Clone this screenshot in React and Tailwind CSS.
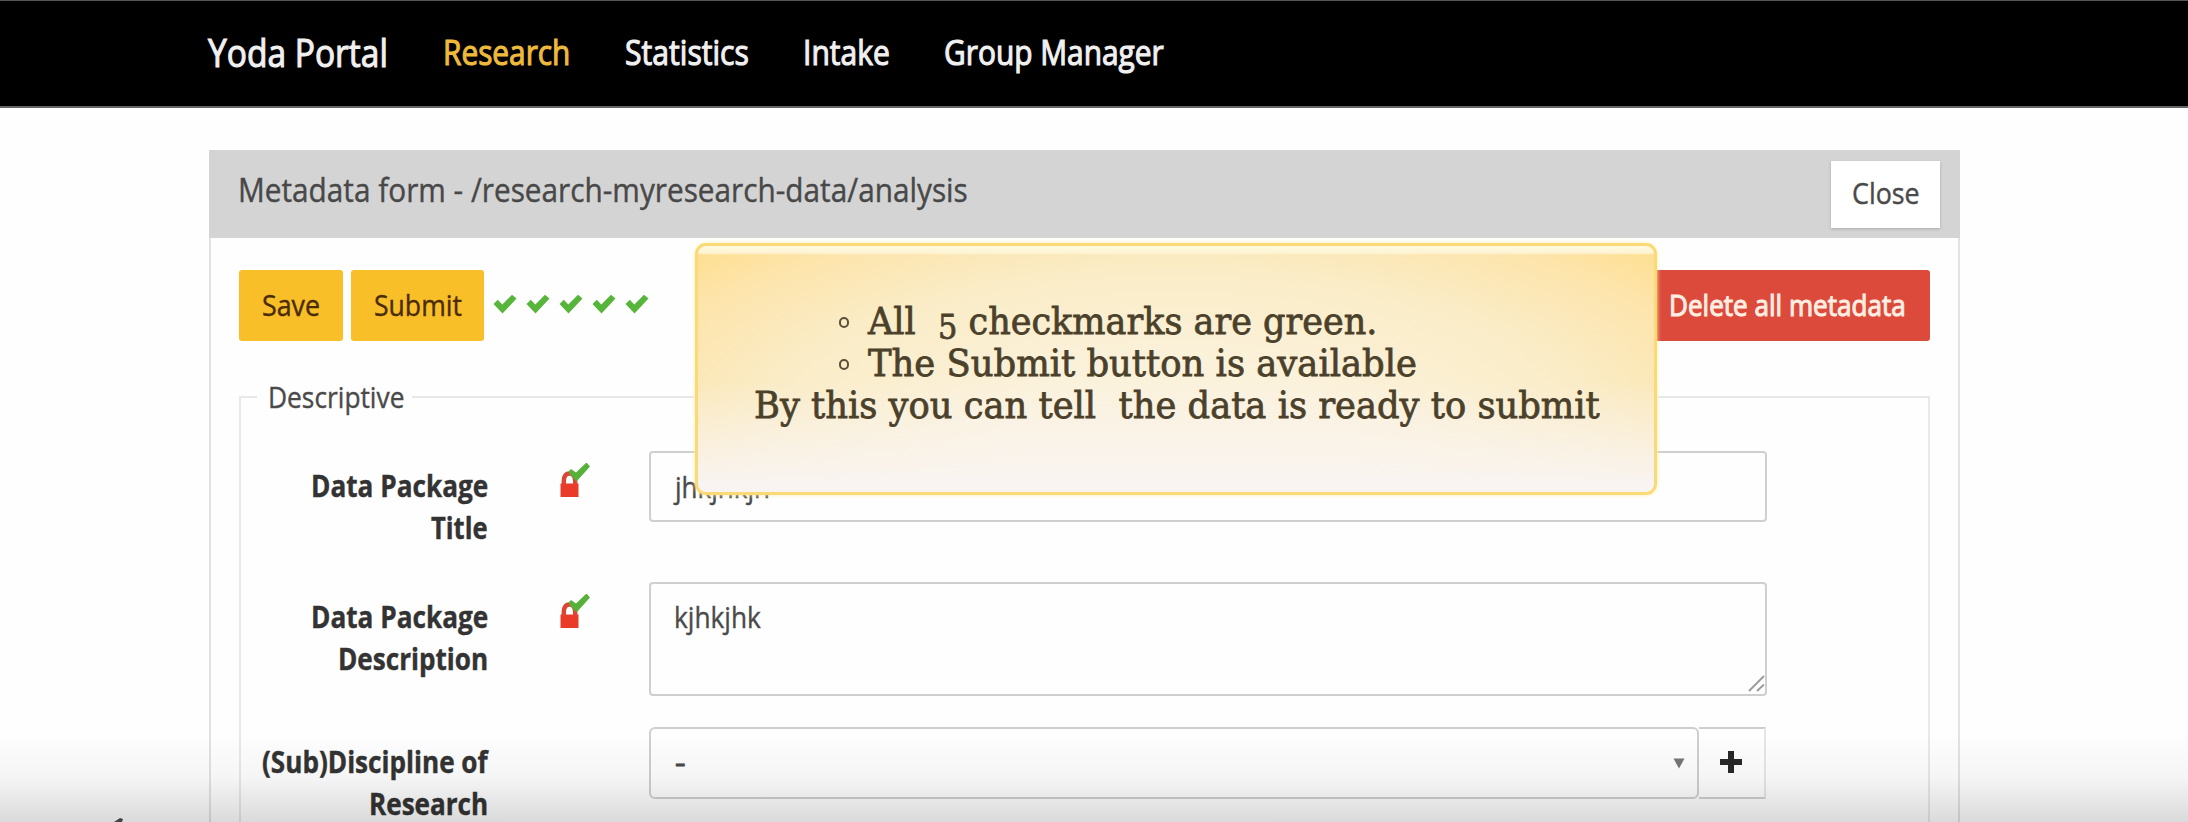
import { useLayoutEffect, useRef, useState } from "react";

// Sets its text narrower or wider so that it fills the width of its box.
function FitText({ className = "", children }) {
  const box = useRef(null);
  const text = useRef(null);
  const [scale, setScale] = useState(1);
  useLayoutEffect(() => {
    setScale(box.current.clientWidth / text.current.offsetWidth);
  }, []);
  return (
    <span ref={box} className={`block shrink-0 ${className}`}>
      <span
        ref={text}
        className="inline-block origin-left whitespace-pre"
        style={{ transform: `scaleX(${scale})` }}
      >
        {children}
      </span>
    </span>
  );
}

function Check({ className = "" }) {
  return (
    <svg viewBox="0 0 24 20" className={`shrink-0 ${className}`} preserveAspectRatio="none">
      <path d="M0.5 10 L4.8 5.8 L9.3 10.6 L19 0.8 L23.5 4.6 L9.5 19.5 Z" fill="#56b53a" />
    </svg>
  );
}

function RequiredIcon() {
  return (
    <svg width="32" height="36" viewBox="0 0 32 36" className="shrink-0">
      <path d="M1.500 20.500 H19.500 V34 H1.500 Z" fill="#ea3a2a" />
      <path d="M4.800 22 V18 Q5 10.500 10.500 10.500 Q16 10.500 16.200 18 V22" fill="none" stroke="#dd4434" strokeWidth="4.400" />
      <path d="M9.500 8.500 L12 6 L17 9.500 L27.500 -0.500 L31 3.500 L17.500 18.500 L11 11.500 Z" fill="#56b03a" />
    </svg>
  );
}

function Labels({ children }) {
  return <div className="w-[247px] shrink-0 pt-[14px] font-bold text-[#333]">{children}</div>;
}

export default function App() {
  return (
    <div className="relative h-[822px] w-[2188px] overflow-hidden bg-[#fefefe] font-['Open_Sans',sans-serif] text-[29.6px] leading-[42px] text-[#4a4a4a] [-webkit-text-stroke:0.4px_currentColor]">
      <header className="flex h-[108px] border-t border-b-2 border-t-[#555] border-b-[#666] bg-black pt-[30px] pl-[208px] text-[33.8px] text-[#f0f0f0] [-webkit-text-stroke:1.1px_currentColor]">
        <FitText className="mr-[55px] w-[180px] text-[38px]">Yoda Portal</FitText>
        <FitText className="mr-[55px] w-[127px] text-[#edba3c]">Research</FitText>
        <FitText className="mr-[54px] w-[124px]">Statistics</FitText>
        <FitText className="mr-[54px] w-[87px]">Intake</FitText>
        <FitText className="w-[220px]">Group Manager</FitText>
      </header>

      <main className="mt-[42px] ml-[209px] w-[1751px]">
        <div className="flex h-[88px] justify-between bg-[#d4d4d4] pt-[11px] pr-[20px] pl-[29px]">
          <FitText className="mt-[8px] w-[730px] text-[32px] leading-[42px] text-[#484848]">
            Metadata form - /research-myresearch-data/analysis
          </FitText>
          <button className="flex h-[67px] w-[109px] justify-center bg-white pt-[11px] text-left shadow-[0_1px_3px_rgba(0,0,0,0.2)]">
            <FitText className="w-[68px]">Close</FitText>
          </button>
        </div>

        <div className="h-[620px] border-x-2 border-[#e2e2e2] px-[28px] pt-[32px]">
          <div className="flex h-[71px] items-center">
            <button className="mr-[8px] flex h-[71px] w-[104px] justify-center rounded-[3px] bg-[#f9bf29] pt-[14px] text-left text-[#4a2c08]">
              <FitText className="w-[58px]">Save</FitText>
            </button>
            <button className="mr-[9px] flex h-[71px] w-[133px] justify-center rounded-[3px] bg-[#f9bf29] pt-[14px] text-left text-[#4a2c08]">
              <FitText className="w-[88px]">Submit</FitText>
            </button>
            <div className="mt-[-3px] flex gap-[9px]">
              <Check className="h-[20px] w-[24px]" />
              <Check className="h-[20px] w-[24px]" />
              <Check className="h-[20px] w-[24px]" />
              <Check className="h-[20px] w-[24px]" />
              <Check className="h-[20px] w-[24px]" />
            </div>
            <button className="ml-auto flex h-[71px] w-[284px] justify-end rounded-[3px] bg-[#dc4a3c] pt-[14px] pr-[24px] text-left text-[#ffeee2] [-webkit-text-stroke:1.1px_currentColor]">
              <FitText className="w-[237px]">Delete all metadata</FitText>
            </button>
          </div>

          <fieldset className="mt-[35px] h-[480px] border-2 border-[#e8e8e8]">
            <legend className="ml-[16px] h-[42px] w-[155px] pl-[11px]">
              <FitText className="w-[136px]">Descriptive</FitText>
            </legend>

            <div className="mt-[33px] flex h-[131px]">
              <Labels>
                <FitText className="ml-auto w-[177px]">Data Package</FitText>
                <FitText className="ml-auto w-[57px]">Title</FitText>
              </Labels>
              <div className="w-[161px] shrink-0 pt-[12px] pl-[71px]">
                <RequiredIcon />
              </div>
              <div className="h-[71px] w-[1118px] rounded-[4px] border-2 border-[#cfcfcf] pt-[13px] pl-[24px]">
                <FitText className="w-[95px]">jhkjhkjh</FitText>
              </div>
            </div>

            <div className="flex h-[145px]">
              <Labels>
                <FitText className="ml-auto w-[177px]">Data Package</FitText>
                <FitText className="ml-auto w-[150px]">Description</FitText>
              </Labels>
              <div className="w-[161px] shrink-0 pt-[12px] pl-[71px]">
                <RequiredIcon />
              </div>
              <div className="flex h-[114px] w-[1118px] items-end justify-between rounded-[4px] border-2 border-[#cfcfcf]">
                <div className="self-start pt-[12px] pl-[23px]">
                  <FitText className="w-[87px]">kjhkjhk</FitText>
                </div>
                <svg width="18" height="20" viewBox="0 0 18 20" fill="none" stroke="#999" strokeWidth="1.800">
                  <path d="M2 17 L17 2 M10 17 L17 10.500" />
                </svg>
              </div>
            </div>

            <div className="flex">
              <Labels>
                <FitText className="ml-auto w-[226px]">(Sub)Discipline of</FitText>
                <FitText className="ml-auto w-[119px]">Research</FitText>
              </Labels>
              <div className="w-[161px] shrink-0" />
              <div className="flex h-[72px] w-[1050px] items-center justify-between rounded-[6px] border-2 border-[#cfcfcf] pr-[12px] pl-[24px]">
                <FitText className="mb-[2px] w-[11px] [-webkit-text-stroke:1px_currentColor]">-</FitText>
                <svg width="12" height="11" viewBox="0 0 12 11">
                  <path d="M0.500 0.500 H11.500 L6 10.500 Z" fill="#777" />
                </svg>
              </div>
              <div className="flex h-[72px] w-[67px] items-center justify-center border-y-2 border-r-2 border-y-[#cfcfcf] border-r-[#e6e6e6]">
                <svg width="22" height="24" viewBox="0 0 22 24" className="mr-[2px] mb-[2px]">
                  <path d="M8 1 H14 V9 H22 V15 H14 V23 H8 V15 H0 V9 H8 Z" fill="#282828" />
                </svg>
              </div>
            </div>
          </fieldset>
        </div>
      </main>

      <div className="absolute top-[243px] left-[695px] h-[252px] w-[962px] rounded-[11px] border-[3px] border-[#fbda75] bg-[linear-gradient(to_bottom,#fffbe0_0px,#fdf3d4_7px,transparent_9px),linear-gradient(to_bottom,transparent_55%,#f9f4f2_97%),radial-gradient(ellipse_at_50%_75%,#fbf2dc_25%,#faecc6_62%,#fde4aa_85%,#fedf8e_100%)] pt-[54px] font-['DejaVu_Serif',serif] text-[38px] text-[#4b412b] shadow-[0_0_4px_#fff3b0] [-webkit-text-stroke:0.8px_currentColor]">
        <ul>
          <li className="flex h-[42px] items-center pl-[141px]">
            <span className="mt-[3px] mr-[19px] h-[11px] w-[10px] rounded-full border-[2.500px] border-[#5a4f38]" />
            <FitText className="w-[509px]">
              All  <span className="relative top-[5px] text-[33px] leading-none">5</span> checkmarks are green.
            </FitText>
          </li>
          <li className="flex h-[42px] items-center pl-[141px]">
            <span className="mt-[3px] mr-[19px] h-[11px] w-[10px] rounded-full border-[2.500px] border-[#5a4f38]" />
            <FitText className="w-[549px]">The Submit button is available</FitText>
          </li>
        </ul>
        <FitText className="ml-[56px] w-[846px]">By this you can tell  the data is ready to submit</FitText>
      </div>

      <div className="pointer-events-none absolute inset-x-0 bottom-0 h-[90px] bg-[linear-gradient(to_bottom,rgba(0,0,0,0)_0%,rgba(0,0,0,0.035)_50%,rgba(0,0,0,0.14)_100%)]" />
      <svg className="absolute bottom-0 left-[114px]" width="10" height="4" viewBox="0 0 10 4">
        <path d="M0 4 L6 0 L9 1 L8 4 Z" fill="#444" />
      </svg>
    </div>
  );
}
